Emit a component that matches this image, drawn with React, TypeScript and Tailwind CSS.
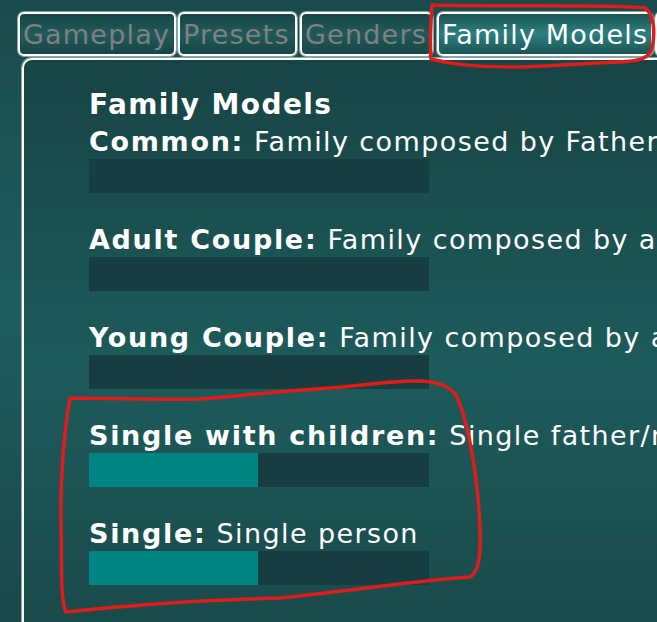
const tabs = [
  { label: 'Gameplay', width: 'w-[158px]', gap: 'ml-0', active: false },
  { label: 'Presets', width: 'w-[119px]', gap: 'ml-[2px]', active: false },
  { label: 'Genders', width: 'w-[133px]', gap: 'ml-[3px]', active: false },
  { label: 'Family Models', width: 'w-[216px]', gap: 'ml-[4px]', active: true },
  { label: 'Other', width: 'w-[120px]', gap: 'ml-[2px]', active: false },
];

const models = [
  { name: 'Common:', text: 'Family composed by Father, Mother and children', fill: false },
  { name: 'Adult Couple:', text: 'Family composed by an adult couple', fill: false },
  { name: 'Young Couple:', text: 'Family composed by a young couple', fill: false },
  { name: 'Single with children:', text: 'Single father/mother with children', fill: true },
  { name: 'Single:', text: 'Single person', fill: true },
];

export default function App() {
  return (
    <div
      className="relative w-[657px] h-[622px] overflow-hidden bg-gradient-to-b from-[#1a4b4c] via-[#1f5d5d] to-[#1a4748] text-white"
      style={{ fontFamily: '"DejaVu Sans", "Liberation Sans", sans-serif' }}
    >
      {/* Tabs */}
      <div className="flex pl-[18px] pt-[12px] w-[900px]">
        {tabs.map((t) => (
          <div
            key={t.label}
            className={`${t.width} ${t.gap} shrink-0 h-[44px] border-2 border-white rounded-[6px] shadow-[0_0_0_1px_#8aa5a5] pl-[3px] pt-[2px] text-[27px] leading-[38px] tracking-[1.2px] whitespace-nowrap overflow-hidden ${
              t.active
                ? 'bg-gradient-to-b from-[#1c5656] via-[#2c7f7f] to-[#1c5454] text-white'
                : 'bg-gradient-to-b from-[#184646] via-[#1f5a5a] to-[#184646] text-[#808080]'
            }`}
          >
            {t.label}
          </div>
        ))}
      </div>

      {/* Panel */}
      <div className="ml-[22px] mt-[2px] w-[720px] h-[620px] border-2 border-white rounded-tl-[10px] shadow-[0_0_0_1px_#8aa5a5] bg-gradient-to-b from-[#174444] via-[#1e5b5b] to-[#194747] pl-[65px] pt-[28px] overflow-hidden">
        <div className="h-[34px] text-[28px] leading-[34px] font-bold tracking-[1.4px]">Family Models</div>
        <div className="flex flex-col gap-[30px] mt-[3px]">
          {models.map((m) => (
            <div key={m.name} className="flex flex-col">
              <div className="h-[34px] text-[27px] leading-[34px] tracking-[1.4px] whitespace-nowrap">
                <span className="font-bold tracking-[1.7px]">{m.name}</span> {m.text}
              </div>
              <div className="w-[340px] h-[34px] bg-[#163d40] flex">
                {m.fill && <div className="w-[169px] h-full bg-[#008484]" />}
              </div>
            </div>
          ))}
        </div>
      </div>

      {/* Red markup */}
      <svg className="absolute inset-0 pointer-events-none" width="657" height="622" viewBox="0 0 657 622" fill="none">
        <path
          d="M432,5 C431,20 430,45 431,59 C450,64 470,67 520,67 C560,66 590,63 620,62 C640,61 650,58 652,48 C655,35 655,15 645,8 C600,4 520,7 432,5 Z"
          stroke="#e21b1b"
          strokeWidth="3.5"
          strokeLinejoin="round"
        />
        <path
          d="M70,398 C66,420 60,470 61,520 C62,560 60,600 66,612 C120,606 200,600 280,598 C360,590 420,580 470,577 C482,570 481,540 479,510 C476,470 468,420 456,395 C448,385 435,380 410,381 C380,382 360,386 330,388 C270,392 230,397 200,399 C150,400 100,398 70,398 Z"
          stroke="#e21b1b"
          strokeWidth="3.5"
          strokeLinejoin="round"
        />
      </svg>
    </div>
  );
}
